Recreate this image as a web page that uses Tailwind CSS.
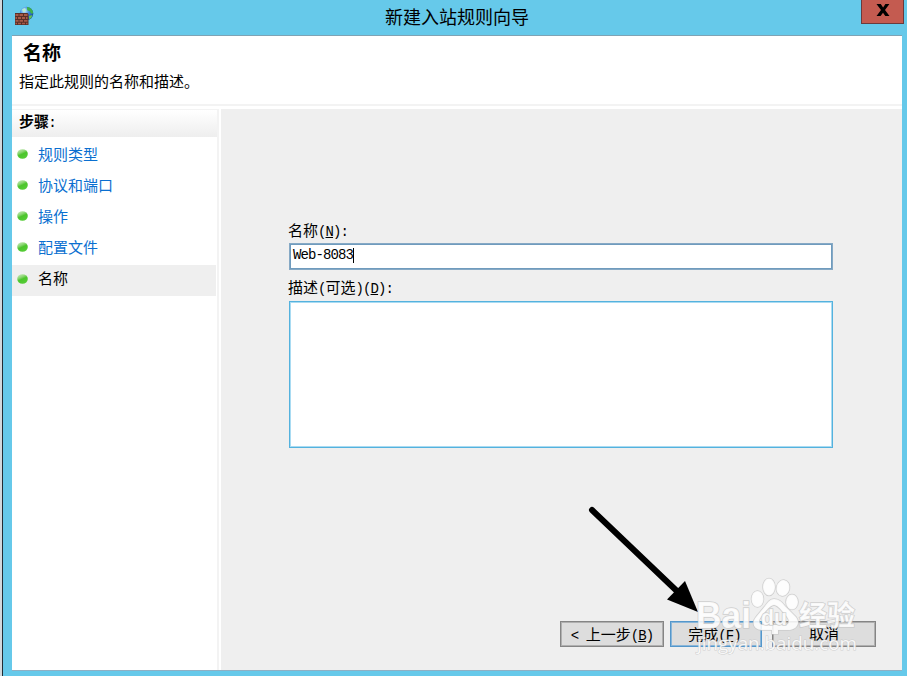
<!DOCTYPE html>
<html lang="zh-CN">
    <head>
        <meta charset="UTF-8" />
        <meta name="viewport" content="width=device-width, initial-scale=1" />
        <title>新建入站规则向导</title>
        <script src="https://cdn.jsdelivr.net/npm/@tailwindcss/browser@4"></script>
    </head>
    <body class="h-screen overflow-hidden bg-[#d3d8dc] pl-[2px] font-['Liberation_Mono','Noto_Sans_CJK_SC',monospace] text-[15px] text-black">
        <div class="relative flex h-full flex-col border-l border-[#222c33] bg-[#66c9ea] pr-[5px] pb-[5px] pl-[9px]">
            <!-- title bar -->
            <header class="flex h-[36px] shrink-0 items-start border-b border-[#7fa3b4]">
                <svg class="mt-[5px] ml-[2px] h-[21px] w-[21px]" viewBox="0 0 21 21">
                    <defs>
                        <radialGradient id="globe" cx="35%" cy="30%" r="75%">
                            <stop offset="0" stop-color="#d4efff" />
                            <stop offset=".45" stop-color="#3c8fe0" />
                            <stop offset="1" stop-color="#123f9a" />
                        </radialGradient>
                        <linearGradient id="bullet" x1="0" y1="0" x2=".5" y2="1">
                            <stop offset="0" stop-color="#d3efc6" />
                            <stop offset=".4" stop-color="#8bd673" />
                            <stop offset=".6" stop-color="#4cc52c" />
                            <stop offset="1" stop-color="#55cc36" />
                        </linearGradient>
                    </defs>
                    <circle cx="12.500" cy="8.500" r="6.800" fill="url(#globe)" />
                    <path d="M13 2c2.500.2 4.500 1.500 5.700 3.700l.5 2.500-2 .5-1.500-2.500-2.500-1z" fill="#3fb04a" />
                    <path d="M15 11l3.500-1-1.300 3-2 1.500z" fill="#66c84c" />
                    <path d="M8 4.500l3-1.500 1 2.500-2.500 2z" fill="#b5ecd0" />
                    <path d="M1 8h12.500l1 1v11H1z" fill="#5a2f27" />
                    <path d="M1.500 9h3v2h-3zM5.500 9h3.500v2H5.500zM10 9h3.500v2H10zM1.500 12h1.500v2H1.500zM4 12h3v2H4zM8 12h3v2H8zM12 12h1.500v2H12zM1.500 15h3v1.800h-3zM5.500 15h3.500v1.800H5.500zM10 15h3.500v1.800H10zM1.500 17.800h1.500v1.500H1.500zM4 17.800h3v1.500H4zM8 17.800h3v1.500H8zM12 17.800h1.500v1.500H12z" fill="#a65a48" />
                </svg>
                <h1 class="ml-[350px] font-['Noto_Sans_CJK_SC',sans-serif] text-[18px] leading-[32px]">新建入站规则向导</h1>
                <button class="-mr-[2px] ml-auto flex h-[24px] w-[43px] items-center justify-center border border-t-0 border-[#6b3a3c] bg-[#c45b50]">
                    <svg class="mb-[3px] h-[12px] w-[14px]" viewBox="0 0 14 12">
                        <path d="M.500 0H4.800l2.300 3.400L9.400 0h4L9 6l4.500 6H9.300L7 8.700 4.600 12H.500L5 6z" />
                    </svg>
                </button>
            </header>

            <div class="flex min-h-0 flex-1 flex-col border-b border-[#8fb0c4] bg-white">
                <div class="h-[70px] shrink-0 border-b-2 border-[#f3f3f3] pt-[6px]">
                    <h2 class="ml-[11px] text-[19px] leading-[26px] font-bold">名称</h2>
                    <p class="mt-[5px] ml-[7px] leading-[22px]">指定此规则的名称和描述。</p>
                </div>

                <div class="flex min-h-0 flex-1 pt-[3px]">
                    <!-- wizard steps -->
                    <nav class="w-[207px] shrink-0 border-r-2 border-[#f3f3f3]">
                        <h3 class="h-[28px] border-t border-[#f3f3f3] bg-linear-to-b from-white to-[#eeeeee] pl-[7px] leading-[28px] font-bold">步骤<span class="-ml-px font-normal">:</span></h3>
                        <ul class="mr-px pt-[3px] text-[#0a6fd0]">
                            <li class="flex h-[31px] items-center pl-[5px]">
                                <svg class="mr-[10px] mb-[4px] h-[10px] w-[11px]" viewBox="0 0 11 10"><ellipse cx="5.500" cy="5" rx="5.300" ry="4.800" fill="url(#bullet)" /></svg><span class="pt-[3px]">规则类型</span>
                            </li>
                            <li class="flex h-[31px] items-center pl-[5px]">
                                <svg class="mr-[10px] mb-[4px] h-[10px] w-[11px]" viewBox="0 0 11 10"><ellipse cx="5.500" cy="5" rx="5.300" ry="4.800" fill="url(#bullet)" /></svg><span class="pt-[3px]">协议和端口</span>
                            </li>
                            <li class="flex h-[31px] items-center pl-[5px]">
                                <svg class="mr-[10px] mb-[4px] h-[10px] w-[11px]" viewBox="0 0 11 10"><ellipse cx="5.500" cy="5" rx="5.300" ry="4.800" fill="url(#bullet)" /></svg><span class="pt-[3px]">操作</span>
                            </li>
                            <li class="flex h-[32px] items-center pl-[5px]">
                                <svg class="mr-[10px] mb-[4px] h-[10px] w-[11px]" viewBox="0 0 11 10"><ellipse cx="5.500" cy="5" rx="5.300" ry="4.800" fill="url(#bullet)" /></svg><span class="pt-[3px]">配置文件</span>
                            </li>
                            <li class="flex h-[31px] items-center bg-[#efefef] pl-[5px] text-black">
                                <svg class="mr-[10px] mb-[4px] h-[10px] w-[11px]" viewBox="0 0 11 10"><ellipse cx="5.500" cy="5" rx="5.300" ry="4.800" fill="url(#bullet)" /></svg><span class="pt-[2px]">名称</span>
                            </li>
                        </ul>
                    </nav>

                    <main class="ml-[2px] flex flex-1 flex-col bg-[#efefef] pl-[68px]">
                        <label class="-ml-px mt-[110px] h-[24px] leading-[27px]">名称<span class="text-[14px] tracking-[-0.9px]">(<u>N</u>):</span></label>
                        <div class="flex h-[27px] w-[544px] items-center border border-[#86a9c5] bg-white pl-[3px] inset-ring inset-ring-[#6f9bbd]">
                            <span class="mb-[2px] text-[14px] tracking-[-0.9px]">Web-8083</span>
                            <span class="mb-[2px] h-[15px] w-px bg-black"></span>
                        </div>
                        <label class="-ml-px mt-[6px] h-[25px] leading-[27px]">描述<span class="text-[14px] tracking-[-0.9px]">(</span>可选<span class="text-[14px] tracking-[-0.9px]">)(<u>D</u>):</span></label>
                        <div class="h-[147px] w-[544px] border border-[#54b2de] bg-white inset-ring inset-ring-[#a9dbf2]"></div>
                        <div class="mt-auto mr-[26px] mb-[23px] flex h-[26px] justify-end">
                            <button class="mr-[6px] w-[104px] border border-[#858585] bg-[#dddddd] leading-[28px] inset-ring inset-ring-[#b0b0b0]"><span class="text-[14px] tracking-[-0.9px]">&lt; </span>上一步<span class="text-[14px] tracking-[-0.9px]">(<u>B</u>)</span></button>
                            <button class="mr-[10px] w-[92px] border border-[#5497cb] bg-[#dddddd] pr-[3px] leading-[28px] inset-ring inset-ring-[#8ab6d9]">完成<span class="text-[14px] tracking-[-0.9px]">(<u>F</u>)</span></button>
                            <button class="w-[104px] border border-[#858585] bg-[#dddddd] leading-[28px] inset-ring inset-ring-[#b0b0b0]">取消</button>
                        </div>
                    </main>
                </div>
            </div>

            <!-- pointer and watermark lie over the window -->
            <svg class="pointer-events-none absolute top-0 left-[-1px] h-[676px] w-[905px]" viewBox="2 0 905 676">
                <path d="M592 510L680 594" stroke="#000" stroke-width="6" stroke-linecap="round" />
                <path d="M698 612L667 599.500 685 581z" />
                <g fill="#fff" fill-opacity=".85" stroke="#c4c4c4" stroke-opacity=".75" stroke-width="1.500" paint-order="stroke">
                    <ellipse cx="757.500" cy="599" rx="6" ry="8" />
                    <ellipse cx="769" cy="587" rx="6" ry="8.500" />
                    <ellipse cx="783" cy="588" rx="6.500" ry="8" transform="rotate(12 783 588)" />
                    <ellipse cx="792" cy="602" rx="6" ry="7.500" />
                    <path fill-rule="evenodd" d="M774 599c5 0 8 3 11 7l11 11c5 7 0 13-8 13h-10v4h-6v-4h-10c-8 0-11-7-6-13l9-11c3-4 5-7 9-7zM774 605c-5 1-7 5-13 12-3 4-2 8 2 8h22c4 0 5-4 2-8-6-7-8-11-13-12z" />
                    <text x="696" y="628" font-family="Liberation Sans" font-weight="700" font-size="36" textLength="55" lengthAdjust="spacingAndGlyphs">Bai</text>
                    <text x="761" y="625" font-family="Liberation Sans" font-weight="700" font-size="22" textLength="26" lengthAdjust="spacingAndGlyphs">du</text>
                    <text x="799" y="626" font-family="Noto Sans CJK SC" font-weight="700" font-size="28" textLength="56">经验</text>
                    <text x="697" y="650" font-family="Open Sans" font-size="18" textLength="160" lengthAdjust="spacingAndGlyphs" stroke-width="1">jingyan.baidu.com</text>
                </g>
            </svg>
        </div>
    </body>
</html>
